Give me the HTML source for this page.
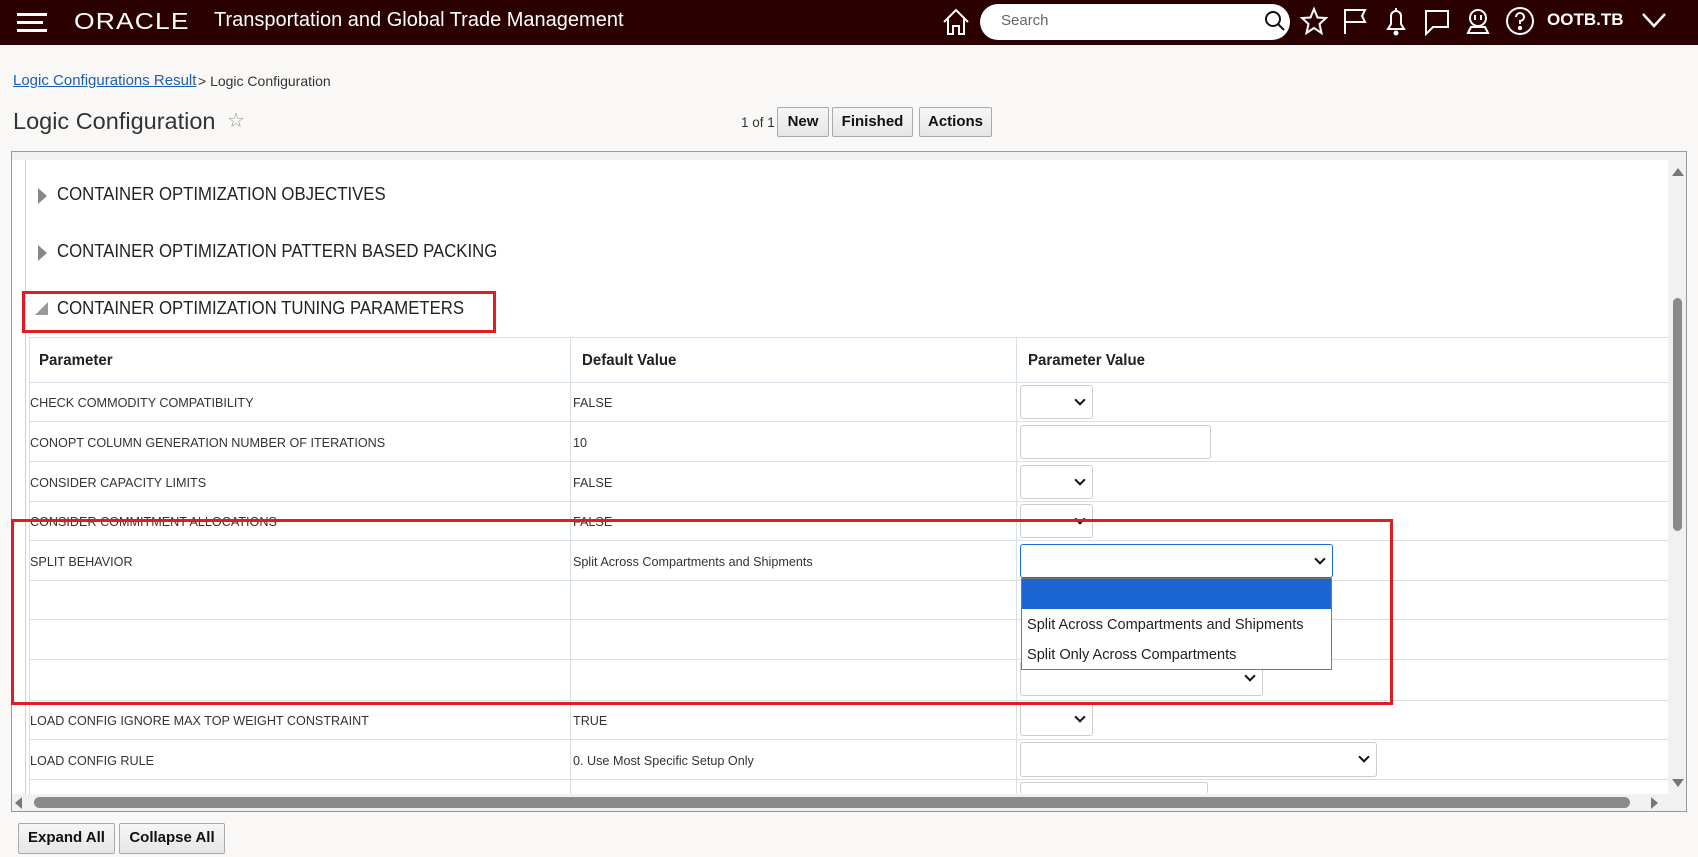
<!DOCTYPE html>
<html><head><meta charset="utf-8"><style>
*{box-sizing:border-box}
body{margin:0;width:1698px;height:857px;overflow:hidden;background:#f9f8f6;font-family:"Liberation Sans",sans-serif;position:relative;color:#222}
.a{position:absolute}
.hdr{left:0;top:0;width:1698px;height:45px;background:#2b0000}
.btn{position:absolute;height:30px;border:1px solid #aaa;border-radius:2px;background:linear-gradient(#f6f6f6,#e6e6e6);font-weight:bold;font-size:15px;text-align:center;line-height:28px;color:#111}
.sec{position:absolute;left:57px;font-size:18px;color:#222;transform:scaleX(.93);transform-origin:left;white-space:nowrap}
.tri{position:absolute;left:38px;width:0;height:0;border-top:8px solid transparent;border-bottom:8px solid transparent;border-left:9px solid #888}
.hl{position:absolute;left:29px;width:1639px;height:1px;background:#d7dfe8}
.vl{position:absolute;width:1px;background:#d7dfe8}
.cell{position:absolute;font-size:13px;color:#333;transform:scaleX(.97);transform-origin:left;white-space:nowrap}
.sel{position:absolute;border:1px solid #ccc;border-radius:3px;background:#fff}
.chev{position:absolute;width:8px;height:8px;border-right:2px solid #111;border-bottom:2px solid #111;transform:rotate(45deg)}
</style></head><body>
<div class="a hdr"></div>
<div class="a" style="left:17px;top:13px;width:30px;height:3px;background:#fff"></div>
<div class="a" style="left:17px;top:21px;width:26px;height:3px;background:#fff"></div>
<div class="a" style="left:17px;top:29px;width:30px;height:3px;background:#fff"></div>
<div class="a" style="left:74px;top:8px;color:#fff;font-size:23px;letter-spacing:1px;transform:scaleX(1.15);transform-origin:left">ORACLE</div>
<div class="a" style="left:214px;top:9px;color:#fff;font-size:20px">Transportation and Global Trade Management</div>
<svg class="a" style="left:940px;top:6px" width="32" height="32" viewBox="0 0 32 32" fill="none" stroke="#fff" stroke-width="2"><path d="M4 16 L16 4 L28 16 M8 13 V28 H13 V20 H19 V28 H24 V13"/></svg>
<div class="a" style="left:980px;top:4px;width:310px;height:36px;border-radius:18px;background:#fff"></div>
<div class="a" style="left:1001px;top:12px;font-size:15px;color:#666">Search</div>
<svg class="a" style="left:1263px;top:9px" width="24" height="24" fill="none" stroke="#111" stroke-width="2"><circle cx="10" cy="10" r="7"/><path d="M15 15 L21 21"/></svg>
<svg class="a" style="left:1299px;top:6px" width="30" height="30" viewBox="0 0 30 30" fill="none" stroke="#fff" stroke-width="2"><path d="M15 3 L18.5 11.5 L27 12 L20.5 18 L22.5 27 L15 22 L7.5 27 L9.5 18 L3 12 L11.5 11.5 Z"/></svg>
<svg class="a" style="left:1340px;top:6px" width="30" height="30" fill="none" stroke="#fff" stroke-width="2"><path d="M5 28 V4 H25 L22 10 L25 16 H5"/></svg>
<svg class="a" style="left:1381px;top:5px" width="30" height="32" fill="none" stroke="#fff" stroke-width="2"><path d="M7 24 H23 L20 19 V11 A5 5 0 0 0 10 11 V19 Z M15 3 V6"/><circle cx="15" cy="28" r="1.5" fill="#fff"/></svg>
<svg class="a" style="left:1422px;top:7px" width="30" height="30" fill="none" stroke="#fff" stroke-width="2"><path d="M4 4 H26 V20 H11 L4 27 Z"/></svg>
<svg class="a" style="left:1463px;top:5px" width="30" height="32" fill="none" stroke="#fff" stroke-width="2"><circle cx="15" cy="13" r="8"/><path d="M12 10 V15 M18 10 V15 M5 28 L8 22 H22 L25 28 Z"/></svg>
<svg class="a" style="left:1504px;top:5px" width="32" height="32" fill="none" stroke="#fff" stroke-width="2"><circle cx="16" cy="16" r="13"/><path d="M12 12 A4 4 0 1 1 16 16 V19"/><circle cx="16" cy="23" r="1.2" fill="#fff"/></svg>
<div class="a" style="left:1547px;top:10px;color:#fff;font-size:17px;font-weight:bold">OOTB.TB</div>
<svg class="a" style="left:1640px;top:10px" width="28" height="20" fill="none" stroke="#fff" stroke-width="2.5"><path d="M3 4 L14 16 L25 4"/></svg>

<div class="a" style="left:13px;top:72px;font-size:15px;color:#1a5fb4;text-decoration:underline">Logic Configurations Result</div>
<div class="a" style="left:198px;top:73px;font-size:14px;color:#333">&gt; Logic Configuration</div>
<div class="a" style="left:13px;top:108px;font-size:23.5px;color:#333">Logic Configuration</div>
<div class="a" style="left:227px;top:108px;font-size:20px;color:#999">☆</div>
<div class="a" style="left:741px;top:115px;font-size:13.5px;color:#333">1 of 1</div>
<div class="btn" style="left:777px;top:107px;width:52px">New</div>
<div class="btn" style="left:832px;top:107px;width:81px">Finished</div>
<div class="btn" style="left:919px;top:107px;width:73px">Actions</div>

<div class="a" style="left:11px;top:151px;width:1676px;height:661px;border:1px solid #999;background:#f1f1f1"></div>
<div class="a" style="left:12px;top:160px;width:1656px;height:634px;background:#fff"></div>
<div class="a" style="left:25px;top:160px;width:1px;height:634px;background:#c8d0e8"></div>
<div class="a" style="left:1669px;top:152px;width:17px;height:640px;background:#f1f1f1"></div>
<div class="a" style="left:1672px;top:168px;border-left:6px solid transparent;border-right:6px solid transparent;border-bottom:8px solid #777"></div>
<div class="a" style="left:1672px;top:779px;border-left:6px solid transparent;border-right:6px solid transparent;border-top:8px solid #777"></div>
<div class="a" style="left:1673px;top:298px;width:9px;height:233px;border-radius:5px;background:#8a8a8a"></div>
<div class="a" style="left:12px;top:794px;width:1657px;height:17px;background:#f1f1f1"></div>
<div class="a" style="left:34px;top:797px;width:1596px;height:11px;border-radius:6px;background:#8a8a8a"></div>
<div class="a" style="left:15px;top:797px;border-top:6px solid transparent;border-bottom:6px solid transparent;border-right:7px solid #777"></div>
<div class="a" style="left:1651px;top:797px;border-top:6px solid transparent;border-bottom:6px solid transparent;border-left:7px solid #777"></div>

<div class="tri" style="top:188px"></div><div class="sec" style="top:184px">CONTAINER OPTIMIZATION OBJECTIVES</div>
<div class="tri" style="top:245px"></div><div class="sec" style="top:241px">CONTAINER OPTIMIZATION PATTERN BASED PACKING</div>
<div class="a" style="left:35px;top:302px;border-left:13px solid transparent;border-bottom:13px solid #999"></div>
<div class="sec" style="top:298px">CONTAINER OPTIMIZATION TUNING PARAMETERS</div>
<div class="a" style="left:22px;top:291px;width:474px;height:42px;border:3px solid #e01b24"></div>

<div class="hl" style="top:337px"></div>
<div class="hl" style="top:382px"></div><div class="hl" style="top:421px"></div><div class="hl" style="top:461px"></div><div class="hl" style="top:501px"></div><div class="hl" style="top:540px"></div><div class="hl" style="top:580px"></div><div class="hl" style="top:619px"></div><div class="hl" style="top:659px"></div><div class="hl" style="top:700px"></div><div class="hl" style="top:739px"></div><div class="hl" style="top:779px"></div>
<div class="vl" style="left:29px;top:337px;height:457px"></div>
<div class="vl" style="left:570px;top:337px;height:457px"></div>
<div class="vl" style="left:1016px;top:337px;height:457px"></div>
<div class="cell" style="left:39px;top:352px;font-size:15.5px;font-weight:bold;color:#222">Parameter</div>
<div class="cell" style="left:582px;top:352px;font-size:15.5px;font-weight:bold;color:#222">Default Value</div>
<div class="cell" style="left:1028px;top:352px;font-size:15.5px;font-weight:bold;color:#222">Parameter Value</div>

<div class="cell" style="left:30px;top:395px">CHECK COMMODITY COMPATIBILITY</div><div class="cell" style="left:573px;top:395px">FALSE</div>
<div class="cell" style="left:30px;top:435px">CONOPT COLUMN GENERATION NUMBER OF ITERATIONS</div><div class="cell" style="left:573px;top:435px">10</div>
<div class="cell" style="left:30px;top:475px">CONSIDER CAPACITY LIMITS</div><div class="cell" style="left:573px;top:475px">FALSE</div>
<div class="cell" style="left:30px;top:514px">CONSIDER COMMITMENT ALLOCATIONS</div><div class="cell" style="left:573px;top:514px">FALSE</div>
<div class="cell" style="left:30px;top:554px">SPLIT BEHAVIOR</div><div class="cell" style="left:573px;top:554px">Split Across Compartments and Shipments</div>
<div class="cell" style="left:30px;top:713px">LOAD CONFIG IGNORE MAX TOP WEIGHT CONSTRAINT</div><div class="cell" style="left:573px;top:713px">TRUE</div>
<div class="cell" style="left:30px;top:753px">LOAD CONFIG RULE</div><div class="cell" style="left:573px;top:753px">0. Use Most Specific Setup Only</div>

<div class="sel" style="left:1020px;top:385px;width:73px;height:34px"><div class="chev" style="left:55px;top:10px"></div></div>
<div class="sel" style="left:1020px;top:425px;width:191px;height:34px"></div>
<div class="sel" style="left:1020px;top:465px;width:73px;height:34px"><div class="chev" style="left:55px;top:10px"></div></div>
<div class="sel" style="left:1020px;top:504px;width:73px;height:34px"><div class="chev" style="left:55px;top:10px"></div></div>
<div class="sel" style="left:1020px;top:661px;width:243px;height:35px"><div class="chev" style="left:225px;top:10px"></div></div>
<div class="sel" style="left:1020px;top:702px;width:73px;height:34px"><div class="chev" style="left:55px;top:10px"></div></div>
<div class="sel" style="left:1020px;top:742px;width:357px;height:35px"><div class="chev" style="left:339px;top:10px"></div></div>
<div class="sel" style="left:1020px;top:782px;width:188px;height:12px;border-bottom:none"></div>
<div class="sel" style="left:1020px;top:544px;width:313px;height:34px;border-color:#1a6fd6"><div class="chev" style="left:295px;top:10px"></div></div>
<div class="a" style="left:1021px;top:578px;width:311px;height:92px;border:1px solid #777;background:#fff"></div>
<div class="a" style="left:1022px;top:579px;width:309px;height:30px;background:#1b66d2"></div>
<div class="cell" style="left:1027px;top:616px;font-size:15px;color:#222">Split Across Compartments and Shipments</div>
<div class="cell" style="left:1027px;top:646px;font-size:15px;color:#222">Split Only Across Compartments</div>

<div class="a" style="left:11px;top:519px;width:1382px;height:186px;border:3px solid #e01b24"></div>

<div class="btn" style="left:18px;top:823px;width:97px;height:31px">Expand All</div>
<div class="btn" style="left:119px;top:823px;width:106px;height:31px">Collapse All</div>
</body></html>
